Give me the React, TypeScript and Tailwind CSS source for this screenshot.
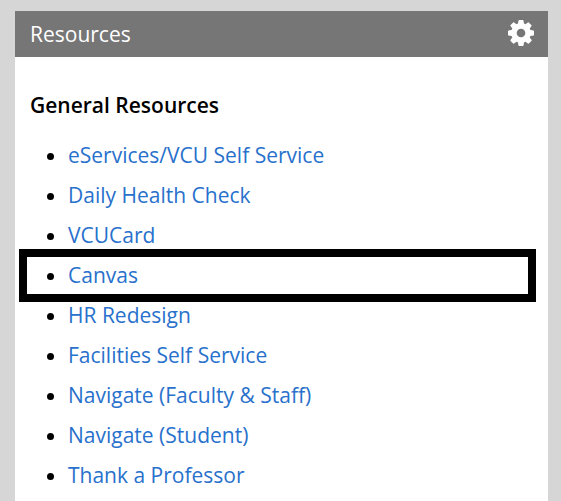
const links = [
  "eServices/VCU Self Service",
  "Daily Health Check",
  "VCUCard",
  "Canvas",
  "HR Redesign",
  "Facilities Self Service",
  "Navigate (Faculty & Staff)",
  "Navigate (Student)",
  "Thank a Professor",
];

function Gear() {
  return (
    <svg viewBox="128 128 1536 1536" className="mb-[3px] size-[26px]" fill="currentColor">
      <path d="M1152 896q0-106-75-181t-181-75-181 75-75 181 75 181 181 75 181-75 75-181zm512-109v222q0 12-8 23t-20 13l-185 28q-19 54-39 91 35 50 107 138 10 12 10 25t-9 23q-27 37-99 108t-94 71q-12 0-26-9l-138-108q-44 23-91 38-16 136-29 186-7 28-36 28h-222q-14 0-24.5-8.5t-11.5-21.5l-28-184q-49-16-90-37l-141 107q-10 9-25 9-14 0-25-11-126-114-165-168-7-10-7-23 0-12 8-23 15-21 51-66.5t54-70.5q-27-50-41-99l-183-27q-13-2-21-12.5t-8-23.5v-222q0-12 8-23t19-13l186-28q14-46 39-92-40-57-107-138-10-12-10-24 0-10 9-23 26-36 98.5-107.5t94.5-71.5q13 0 26 10l138 107q44-23 91-38 16-136 29-186 7-28 36-28h222q14 0 24.5 8.5t11.5 21.5l28 184q49 16 90 37l142-107q9-9 24-9 13 0 25 10 129 119 165 170 7 8 7 22 0 12-8 23-15 21-51 66.5t-54 70.5q26 50 41 98l183 28q13 2 21 12.5t8 23.5z" />
    </svg>
  );
}

export default function App() {
  return (
    <div className="h-[501px] w-[561px] overflow-hidden bg-[#d6d6d6] pt-[11px] pr-[13px] pl-[15px] font-['Open_Sans',sans-serif]">
      <section className="h-[490px] bg-white">
        <header className="flex h-[46px] items-center justify-between bg-[#767676] pr-[14px] pl-[15px] text-white">
          <h1 className="mb-px text-[21px] leading-[30px]">Resources</h1>
          <Gear />
        </header>
        <h2 className="pt-[33px] pl-[15px] text-[21px] leading-[30px] font-semibold text-black">General Resources</h2>
        <ul className="pt-4">
          {links.map((link) => (
            <li key={link} className="relative flex h-10 items-center pl-[32px]">
              {link === "Canvas" && (
                <span className="absolute top-[-7px] left-1 h-[53px] w-[517px] border-[8px] border-black" />
              )}
              <span className="mt-px mr-[14px] size-[7px] rounded-full bg-black" />
              <a className="mb-[2px] text-[21px] leading-[30px] whitespace-nowrap text-[#2871cc]">{link}</a>
            </li>
          ))}
        </ul>
      </section>
    </div>
  );
}
